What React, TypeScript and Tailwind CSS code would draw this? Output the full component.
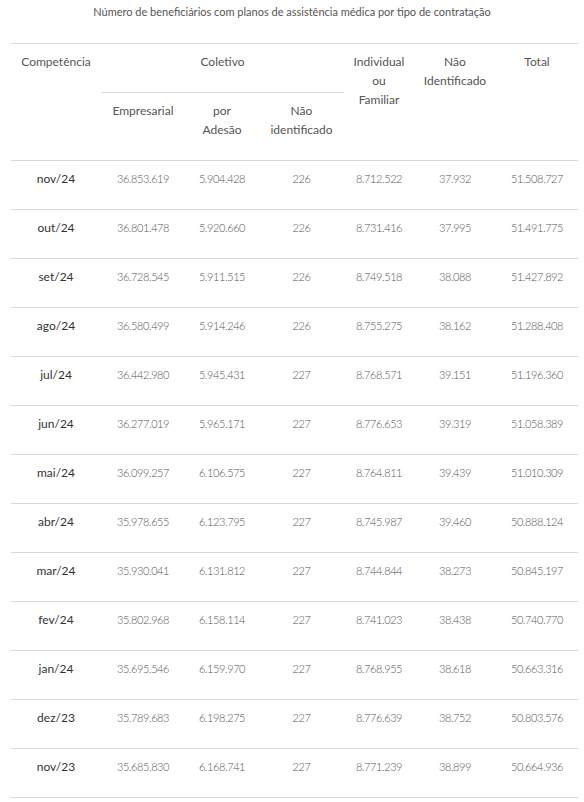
const rows: string[][] = [
  ["nov/24", "36.853.619", "5.904.428", "226", "8.712.522", "37.932", "51.508.727"],
  ["out/24", "36.801.478", "5.920.660", "226", "8.731.416", "37.995", "51.491.775"],
  ["set/24", "36.728.545", "5.911.515", "226", "8.749.518", "38.088", "51.427.892"],
  ["ago/24", "36.580.499", "5.914.246", "226", "8.755.275", "38.162", "51.288.408"],
  ["jul/24", "36.442.980", "5.945.431", "227", "8.768.571", "39.151", "51.196.360"],
  ["jun/24", "36.277.019", "5.965.171", "227", "8.776.653", "39.319", "51.058.389"],
  ["mai/24", "36.099.257", "6.106.575", "227", "8.764.811", "39.439", "51.010.309"],
  ["abr/24", "35.978.655", "6.123.795", "227", "8.745.987", "39.460", "50.888.124"],
  ["mar/24", "35.930.041", "6.131.812", "227", "8.744.844", "38.273", "50.845.197"],
  ["fev/24", "35.802.968", "6.158.114", "227", "8.741.023", "38.438", "50.740.770"],
  ["jan/24", "35.695.546", "6.159.970", "227", "8.768.955", "38.618", "50.663.316"],
  ["dez/23", "35.789.683", "6.198.275", "227", "8.776.639", "38.752", "50.803.576"],
  ["nov/23", "35.685.830", "6.168.741", "227", "8.771.239", "38.899", "50.664.936"],
];

const cols = "grid grid-cols-[90px_84px_74px_85px_70px_82px_82px]";

function App() {
  return (
    <div className="h-[802px] w-[584px] bg-white font-['Lato',sans-serif] text-[#555]">
      <h2 className="h-[43px] text-center text-[11px] leading-[24px] text-[#555]">
        Número de beneficiários com planos de assistência médica por tipo de contratação
      </h2>

      <div className="ml-[11px] w-[567px] border-t border-[#d3dbe0]">
        {/* header */}
        <div className={`${cols} grid-rows-[49px_67px] border-b border-[#d3dbe0] text-center text-[12px] leading-[19px]`}>
          <div className="row-span-2 pt-2">Competência</div>
          <div className="col-span-3 border-b border-[#d3dbe0] pt-2">Coletivo</div>
          <div className="row-span-2 pt-2">
            Individual
            <br />
            ou
            <br />
            Familiar
          </div>
          <div className="row-span-2 pt-2">
            Não
            <br />
            Identificado
          </div>
          <div className="row-span-2 pt-2">Total</div>
          <div className="pt-2">Empresarial</div>
          <div className="pt-2">
            por
            <br />
            Adesão
          </div>
          <div className="pt-2">
            Não
            <br />
            identificado
          </div>
        </div>

        {/* body */}
        {rows.map((r) => (
          <div
            key={r[0]}
            className={`${cols} h-[49px] border-b border-[#d3dbe0] pt-2 text-center text-[11px] leading-[19px]`}
          >
            <div className="text-[12px] text-[#333]">{r[0]}</div>
            {r.slice(1).map((v, i) => (
              <div key={i} className="font-light tracking-[-0.4px] text-[#555]">
                {v}
              </div>
            ))}
          </div>
        ))}
      </div>
    </div>
  );
}

export default App;
